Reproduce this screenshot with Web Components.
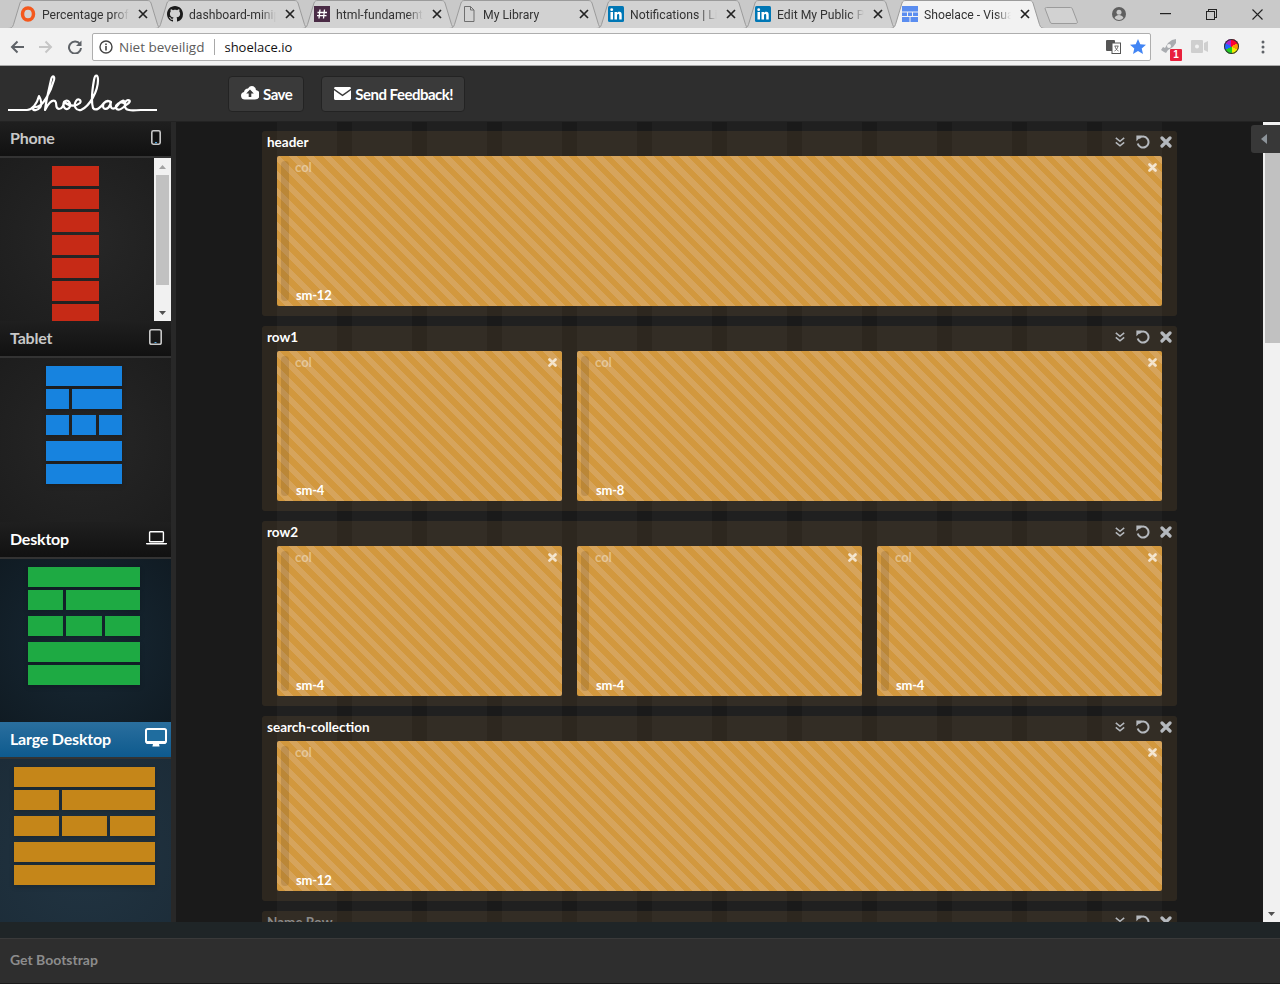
<!DOCTYPE html>
<html>
<head>
<meta charset="utf-8">
<title>Shoelace - Visual</title>
<style>
    html, body { margin: 0; height: 100%; background: #1b1b1b; overflow: hidden; }
    body { display: flex; flex-direction: column; height: 984px; font-family: "Lato", "Liberation Sans", sans-serif; }
</style>
</head>
<body>
<browser-chrome></browser-chrome>
<app-header></app-header>
<app-main>
    <device-panel slot="sidebar" name="Phone" icon="phone" height="199" head="34" pad="10" tone="plain" preview="dark" muted>
        <layout-preview color="#c62a16" start="52" rows="47;47;47;47;47;47;47" flat></layout-preview>
        <mini-scrollbar slot="bar"></mini-scrollbar>
    </device-panel>
    <device-panel slot="sidebar" name="Tablet" icon="tablet" height="201" head="35" pad="9" tone="plain" preview="dark" muted>
        <layout-preview color="#1783df" start="46" rows="76;23 50;23 24 23;76;76"></layout-preview>
    </device-panel>
    <device-panel slot="sidebar" name="Desktop" icon="laptop" height="200" head="35" pad="4" tone="plain" preview="navy">
        <layout-preview color="#1eaa43" start="28" rows="112;35 74;35 36 35;112;112"></layout-preview>
    </device-panel>
    <device-panel slot="sidebar" name="Large Desktop" icon="desktop" height="200" head="35" pad="4" tone="active" preview="blue">
        <layout-preview color="#c58619" start="14" rows="141;45 93;45 45 45;141;141"></layout-preview>
    </device-panel>

    <grid-row name="header"><grid-col span="12" label="sm-12"></grid-col></grid-row>
    <grid-row name="row1"><grid-col span="4" label="sm-4"></grid-col><grid-col span="8" label="sm-8"></grid-col></grid-row>
    <grid-row name="row2"><grid-col span="4" label="sm-4"></grid-col><grid-col span="4" label="sm-4"></grid-col><grid-col span="4" label="sm-4"></grid-col></grid-row>
    <grid-row name="search-collection"><grid-col span="12" label="sm-12"></grid-col></grid-row>
    <grid-row name="Name Row" placeholder></grid-row>
</app-main>
<app-footer></app-footer>

<script>
const ICONS = {
    phone: `<svg width="10" height="15" viewBox="0 0 10 15"><rect x=".8" y=".8" width="8.4" height="13.4" rx="1.6" fill="none" stroke="currentColor" stroke-width="1.6"/><rect x="2" y="3" width="6" height="8" fill="#111" /><rect x="4" y="12" width="2" height="1.2" fill="#4aa3df"/></svg>`,
    tablet: `<svg width="13" height="16" viewBox="0 0 13 16"><rect x=".8" y=".8" width="11.4" height="14.4" rx="1.8" fill="none" stroke="currentColor" stroke-width="1.6"/><rect x="5.5" y="13" width="2" height="1" fill="#4aa3df"/></svg>`,
    laptop: `<svg width="21" height="14" viewBox="0 0 21 14"><rect x="3.6" y=".7" width="13.8" height="10" rx=".8" fill="none" stroke="currentColor" stroke-width="1.4"/><path d="M0 12h21v.6c0 .6-.4.9-1 .9H1c-.6 0-1-.3-1-.9z" fill="currentColor"/></svg>`,
    desktop: `<svg width="22" height="20" viewBox="0 0 22 20"><rect x="1" y="1" width="20" height="13.5" rx="1.6" fill="#1f6d9f" stroke="currentColor" stroke-width="2"/><path d="M1 13h20v1.5a1.5 1.5 0 0 1-1.5 1.5h-17A1.5 1.5 0 0 1 1 14.500z" fill="currentColor"/><path d="M8 16h6l.6 2.500H7.400z" fill="currentColor"/></svg>`,
    cloud: `<svg width="18" height="14" viewBox="0 0 18 14"><path fill-rule="evenodd" fill="#fff" d="M4 13.500A3.800 3.800 0 0 1 3 6a4.300 4.300 0 0 1 4-3.500C8 .8 9.500 0 10.800 0c2.300 0 4 1.700 4.100 4a4.800 4.800 0 0 1 -1 9.500zM9 3.500 5.200 7.500h2.500v3.500h2.600V7.500h2.500z"/></svg>`,
    mail: `<svg width="17" height="13" viewBox="0 0 17 13"><path fill="#fff" d="M1.500 0h14c.8 0 1.500.6 1.500 1.400L8.500 7.500 0 1.400C0 .6.700 0 1.500 0z"/><path fill="#fff" d="M0 3.200 8.500 9.300 17 3.200v8.300c0 .8-.7 1.500-1.500 1.500h-14C.7 13 0 12.300 0 11.500z"/></svg>`,
    chevrons: `<svg width="10" height="10" viewBox="0 0 10 10" fill="none" stroke="currentColor" stroke-width="1.500"><path d="M.8 .8 5 4.300 9.200 .8"/><path d="M.8 5.300 5 8.800 9.200 5.300"/></svg>`,
    undo: `<svg width="14" height="14" viewBox="0 0 14 14" fill="none"><path d="M3 3.300A5.500 5.500 0 1 1 1.700 8.500" stroke="currentColor" stroke-width="2"/><path d="M.4 .6 6 .6 .4 6.200z" fill="currentColor"/></svg>`,
    times: `<svg width="12" height="12" viewBox="0 0 12 12" stroke="currentColor" stroke-width="3.200" stroke-linecap="round"><path d="M2 2l8 8M10 2l-8 8"/></svg>`
}

// favicons for the tabs
const FAVICONS = {
    ring: `<svg width="16" height="16" viewBox="0 0 16 16"><ellipse cx="8" cy="8" rx="5.500" ry="6" fill="none" stroke="#f4581c" stroke-width="3.500"/></svg>`,
    github: `<svg width="16" height="16" viewBox="0 0 16 16"><path fill="#1b1b1b" d="M8 0C3.580 0 0 3.580 0 8c0 3.540 2.290 6.530 5.470 7.590.4.070.55-.17.55-.38 0-.19-.01-.82-.01-1.490-2.010.37-2.530-.49-2.690-.94-.09-.23-.48-.94-.82-1.130-.28-.15-.68-.52-.01-.53.63-.01 1.080.58 1.230.82.72 1.210 1.870.87 2.330.66.07-.52.28-.87.51-1.070-1.780-.2-3.640-.89-3.640-3.950 0-.87.31-1.590.82-2.150-.08-.2-.36-1.020.08-2.120 0 0 .67-.21 2.200.82.64-.18 1.320-.27 2-.27.68 0 1.360.09 2 .27 1.530-1.040 2.200-.82 2.200-.82.44 1.100.16 1.920.08 2.120.51.56.82 1.270.82 2.150 0 3.070-1.870 3.750-3.650 3.950.29.25.54.73.54 1.480 0 1.070-.01 1.930-.01 2.200 0 .21.15.46.55.38A8.013 8.013 0 0 0 16 8c0-4.420-3.580-8-8-8z"/></svg>`,
    hash: `<svg width="16" height="16" viewBox="0 0 16 16"><rect width="16" height="16" fill="#4a2b45"/><path d="M6 3.500 5 12.500M10.500 3.500l-1 9M3.500 6.500h9.500M3 9.700h9.500" stroke="#fff" stroke-width="1.300"/></svg>`,
    doc: `<svg width="16" height="16" viewBox="0 0 16 16" fill="none" stroke="#6f6f6f"><path d="M3.500 .5h6l3.500 3.500v11.500h-9.500z"/><path d="M9.500 .5v3.500h3.500"/></svg>`,
    linkedin: `<svg width="16" height="16" viewBox="0 0 16 16"><rect width="16" height="16" rx="1.500" fill="#0077b5"/><rect x="2.500" y="6" width="2.500" height="7.500" fill="#fff"/><circle cx="3.700" cy="3.700" r="1.400" fill="#fff"/><path d="M6.500 6H9v1.100C9.500 6.300 10.300 5.800 11.300 5.800c1.700 0 2.400 1.100 2.400 3v4.700h-2.500V9.300c0-.9-.3-1.400-1-1.400S9 8.500 9 9.300v4.200H6.500z" fill="#fff"/></svg>`,
    grid: `<svg width="16" height="16" viewBox="0 0 16 16" fill="#5a8df0"><rect width="16" height="5.500"/><rect y="6.500" width="5" height="3.500"/><rect x="6" y="6.500" width="4" height="3.500"/><rect x="11" y="6.500" width="5" height="3.500"/><rect y="11" width="7.500" height="5"/><rect x="8.500" y="11" width="7.500" height="5"/></svg>`
}

class BrowserTab extends HTMLElement {
    constructor() {
        super();
        this.shadow = this.attachShadow({ mode: 'open' });
    }

    connectedCallback() {
        const active = this.hasAttribute('active');
        this.shadow.innerHTML = /*html*/`
        <style>
            :host { display: flex; align-items: center; position: relative; width: 155px; height: 28px; margin-right: -8px; padding-left: 12px; box-sizing: border-box; z-index: ${active ? 2 : 1}; font: 12.2px "Roboto", "Liberation Sans", sans-serif; color: #333; }
            .shape { position: absolute; left: 0; top: 0; z-index: -1; }
            .icon { width: 16px; height: 16px; margin-right: 6px; flex: none; display: flex; }
            .name { width: 87px; flex: none; overflow: hidden; white-space: nowrap; padding-top: 1px; -webkit-mask-image: linear-gradient(90deg, #000 82%, transparent); mask-image: linear-gradient(90deg, #000 82%, transparent); }
            .close { margin-left: 9px; width: 10px; height: 10px; display: flex; }
        </style>
        <svg class="shape" width="155" height="29" viewBox="0 0 155 29"><path d="M0 28.500c3 0 4.500-1 5.500-4L12 3c.7-1.800 1.700-2.500 4-2.500h123c2.300 0 3.300.7 4 2.500l6.500 21.500c1 3 2.500 4 5.500 4" fill="${active ? '#f2f2f2' : '#d2d2d2'}" stroke="#9b9b9b"/></svg>
        <span class="icon">${FAVICONS[this.getAttribute('icon')]}</span>
        <span class="name">${this.getAttribute('label')}</span>
        <svg class="close" viewBox="0 0 10 10" stroke="#222" stroke-width="1.700"><path d="M1 1l8 8M9 1l-8 8"/></svg>
        `;
    }
}

class BrowserChrome extends HTMLElement {
    constructor() {
        super();
        this.shadow = this.attachShadow({ mode: 'open' });
    }

    connectedCallback() {
        this.shadow.innerHTML = /*html*/`
        <style>
            :host { display: block; flex: none; font-family: "Open Sans", "Liberation Sans", sans-serif; }
            .strip { display: flex; height: 28px; padding-left: 8px; background: #c9c9c9; position: relative; }
            .newtab { margin: 6px 0 0 7px; flex: none; }
            .win { margin-left: auto; display: flex; }
            .win span { width: 46px; height: 28px; display: flex; align-items: center; justify-content: center; }
            .bar { height: 37px; background: #f2f2f2; border-bottom: 1px solid #a9a9a9; display: flex; align-items: center; padding-left: 2px; box-sizing: content-box; position: relative; z-index: 3; }
            .btn { width: 29px; display: flex; justify-content: center; flex: none; }
            .address { margin-left: 3px; width: 1059px; height: 28px; box-sizing: border-box; background: #fff; border: 1px solid #aeaeae; border-radius: 2px; display: flex; align-items: center; font-size: 13px; flex: none; }
            .info { margin-left: 6px; display: flex; }
            .insecure { margin-left: 6px; color: #5c5c5c; font-size: 13.5px; }
            .sep { margin: 0 9px 0 10px; width: 1px; height: 16px; background: #a8a8a8; }
            .url { color: #111; }
            .right { margin-left: auto; display: flex; align-items: center; gap: 9px; padding-right: 4px; }
            .ext { flex: none; width: 31.3px; height: 24px; display: flex; justify-content: center; align-items: center; position: relative; }
            .exts { margin-left: 2px; display: flex; }
            .badge { position: absolute; left: 17px; top: 14px; width: 12px; height: 12px; background: #e8203c; border-radius: 1px; color: #fff; font: bold 10px/12px "Liberation Sans", sans-serif; text-align: center; }
            .wheel { width: 15px; height: 15px; border-radius: 50%; background: conic-gradient(#f03 0 60deg, #f90 60deg 120deg, #ee0 120deg 180deg, #2c2 180deg 240deg, #26f 240deg 300deg, #a2c 300deg 360deg); box-shadow: 0 0 0 1px #333 inset; }
        </style>
        <div class="strip">
            <browser-tab icon="ring" label="Percentage prof"></browser-tab>
            <browser-tab icon="github" label="dashboard-minip"></browser-tab>
            <browser-tab icon="hash" label="html-fundament"></browser-tab>
            <browser-tab icon="doc" label="My Library"></browser-tab>
            <browser-tab icon="linkedin" label="Notifications | Lin"></browser-tab>
            <browser-tab icon="linkedin" label="Edit My Public Pr"></browser-tab>
            <browser-tab icon="grid" label="Shoelace - Visual" active></browser-tab>
            <svg class="newtab" width="36" height="19" viewBox="0 0 36 19"><path d="M2.500 1.500h24c1 0 1.500.4 1.800 1.200l5 13c.3 1-.1 1.800-1.300 1.800H8c-1 0-1.500-.5-1.800-1.300L1.200 3c-.3-.9.300-1.500 1.300-1.500z" fill="#d2d2d2" stroke="#9b9b9b"/></svg>
            <div class="win">
                <span><svg width="14" height="14" viewBox="0 0 14 14"><circle cx="7" cy="7" r="7" fill="#5f5f5f"/><circle cx="7" cy="5.200" r="2.500" fill="#c9c9c9"/><path d="M2.500 11c1-2.300 2.800-3 4.500-3s3.500.7 4.500 3a6 6 0 0 1-9 0z" fill="#c9c9c9"/></svg></span>
                <span><svg width="11" height="2"><rect width="11" height="1.200" fill="#222"/></svg></span>
                <span><svg width="11" height="11" viewBox="0 0 11 11" fill="#c9c9c9" stroke="#222"><rect x="2.500" y=".5" width="8" height="8"/><rect x=".5" y="2.500" width="8" height="8"/></svg></span>
                <span><svg width="11" height="11" viewBox="0 0 11 11" stroke="#222" stroke-width="1.100"><path d="M.5 .5l10 10M10.500 .5l-10 10"/></svg></span>
            </div>
        </div>
        <div class="bar">
            <span class="btn"><svg width="14" height="14" viewBox="0 0 14 14" fill="none" stroke="#5f6368" stroke-width="2"><path d="M14 7H2M7.500 1.500 2 7l5.500 5.500"/></svg></span>
            <span class="btn"><svg width="14" height="14" viewBox="0 0 14 14" fill="none" stroke="#c6c6c6" stroke-width="2"><path d="M0 7h12M6.500 1.500 12 7l-5.500 5.500"/></svg></span>
            <span class="btn"><svg width="14" height="14" viewBox="0 0 14 14" fill="none"><path d="M12 4.200A6 6 0 1 0 13 8" stroke="#5f6368" stroke-width="2"/><path d="M13.500 .5v5.500H8z" fill="#5f6368"/></svg></span>
            <div class="address">
                <span class="info"><svg width="14" height="14" viewBox="0 0 14 14" fill="none"><circle cx="7" cy="7" r="6" stroke="#444" stroke-width="1.400"/><rect x="6.200" y="6" width="1.600" height="4.500" fill="#444"/><rect x="6.200" y="3.500" width="1.600" height="1.600" fill="#444"/></svg></span>
                <span class="insecure">Niet beveiligd</span>
                <span class="sep"></span>
                <span class="url">shoelace.io</span>
                <span class="right">
                    <svg width="15" height="14" viewBox="0 0 15 14"><rect width="9" height="11" rx="1" fill="#555"/><rect x="6" y="3" width="8.500" height="10.500" fill="#fff" stroke="#555"/><path d="M8.500 6h4M9 6c.5 2.500 2 4.500 3.500 5M12 6c-.5 2.500-2 4.500-3.500 5" stroke="#555" fill="none" stroke-width=".8"/></svg>
                    <svg width="16" height="15" viewBox="0 0 16 15"><path d="M8 0l2.300 5.200 5.700.5-4.300 3.700 1.300 5.600L8 12l-5 3 1.300-5.600L0 5.700l5.700-.5z" fill="#4285f4"/></svg>
                </span>
            </div>
            <div class="exts">
                <span class="ext"><svg width="16" height="15" viewBox="0 0 16 15" fill="#a9acb0"><path d="M0 11l2-3 2 1 3-5 4-3 4-1v4l-3 4-5 3-2 3-2-1z"/><circle cx="8" cy="7" r="2" fill="#f2f2f2"/></svg><span class="badge">1</span></span>
                <span class="ext"><svg width="17" height="13" viewBox="0 0 17 13" fill="#cfcfcf"><rect width="12" height="13" rx="1"/><path d="M13 3l4-2v11l-4-2z"/><circle cx="6" cy="6.500" r="2" fill="#f2f2f2"/></svg></span>
                <span class="ext"><span class="wheel"></span></span>
                <span class="ext"><svg width="4" height="14" viewBox="0 0 4 14" fill="#5f6368"><circle cx="2" cy="2" r="1.500"/><circle cx="2" cy="7" r="1.500"/><circle cx="2" cy="12" r="1.500"/></svg></span>
            </div>
        </div>
        `;
    }
}

class AppButton extends HTMLElement {
    constructor() {
        super();
        this.attachShadow({ mode: 'open' }).innerHTML = /*html*/`
        <style>
            :host { display: flex; align-items: center; gap: 4px; height: 36px; box-sizing: border-box; padding: 0 11px 0 12px; background: #3a3a3a; border: 1px solid #232323; border-radius: 4px; color: #fff; font-weight: 700; font-size: 15px; letter-spacing: -.5px; line-height: 32px; }
            span { display: flex; }
        </style>
        <span><slot name="icon"></slot></span><slot></slot>
        `;
    }
}

class AppHeader extends HTMLElement {
    constructor() {
        super();
        this.shadow = this.attachShadow({ mode: 'open' });
    }

    connectedCallback() {
        this.shadow.innerHTML = /*html*/`
        <style>
            :host { display: flex; flex: none; align-items: center; height: 55px; padding-left: 8px; background: #2e2e2e; border-bottom: 1px solid #232323; box-sizing: content-box; font-family: "Lato", "Liberation Sans", sans-serif; }
            .logo { display: block; flex: none; }
            .actions { display: flex; gap: 17px; margin-left: 71px; margin-top: 1px; }
        </style>
        <svg class="logo" width="149" height="46" viewBox="0 0 149 46" role="img" aria-label="shoelace logo" fill="none" stroke="#fff" stroke-width="2.200" stroke-linecap="round" stroke-linejoin="round">
            <path d="M0 39H19C24 39 29 33 31 25C34 30 35 37 28 39C24 40 24 36 28 36C35 36 43 20 46 9C47 4 44 4 43 9C41 18 38 30 37 39C40 33 44 28 47 30C50 33 46 37 51 38C54 38 56 34 56 31C60 27 64 33 61 37C58 40 54 36 56 31C60 34 66 37 72 32C74 29 70 27 68 30C65 35 68 40 73 39C82 35 90 20 90 9C90 3 87 3 86 9C84 20 83 30 85 37C88 41 93 36 96 32C99 28 104 30 102 34C100 39 95 39 95 35C95 31 100 29 103 31C102 35 103 39 107 37C110 35 111 31 114 30C116 29 117 31 116 32C112 30 107 34 108 37C110 41 115 37 118 34C122 32 123 29 120 29C116 30 115 38 121 39C125 40 128 39 133 39H149"/>
        </svg>
        <div class="actions">
            <app-button><span slot="icon">${ICONS.cloud}</span>Save</app-button>
            <app-button><span slot="icon">${ICONS.mail}</span>Send Feedback!</app-button>
        </div>
        `;
    }
}

class DevicePanel extends HTMLElement {
    constructor() {
        super();
        this.shadow = this.attachShadow({ mode: 'open' });
    }

    connectedCallback() {
        const backgrounds = {
            dark: 'radial-gradient(circle at 50% 50%, #272727, #1d1d1d)',
            navy: 'radial-gradient(circle at 50% 50%, #182935, #101b23)',
            blue: 'radial-gradient(circle at 50% 60%, #213442, #1c2c38)'
        };
        const active = this.getAttribute('tone') === 'active';
        const textColor = this.hasAttribute('muted') ? '#c8c8c8' : '#fff';
        this.shadow.innerHTML = /*html*/`
        <style>
            :host { display: flex; flex-direction: column; flex: none; height: ${this.getAttribute('height')}px; overflow: hidden; }
            .head { flex: none; height: ${this.getAttribute('head')}px; display: flex; align-items: center; justify-content: space-between; padding: 0 ${this.getAttribute('pad')}px 0 10px; box-sizing: border-box; font-weight: 700; font-size: 16px; letter-spacing: -.2px; color: ${textColor}; background: ${active ? 'linear-gradient(#2a6f9e, #0e5a8e)' : 'linear-gradient(#1f1f1f, #111)'}; }
            .head span { margin-top: -3px; }
            .head svg { display: block; margin-top: -3px; }
            .line { flex: none; height: 2px; background: #333; }
            .view { flex: 1; display: flex; min-height: 0; background: ${backgrounds[this.getAttribute('preview')]}; }
            .inner { flex: 1; overflow: hidden; padding-top: 8px; }
        </style>
        <div class="head"><span>${this.getAttribute('name')}</span>${ICONS[this.getAttribute('icon')]}</div>
        <div class="line"></div>
        <div class="view"><div class="inner"><slot></slot></div><slot name="bar"></slot></div>
        `;
    }
}

class LayoutPreview extends HTMLElement {
    constructor() {
        super();
        this.shadow = this.attachShadow({ mode: 'open' });
    }

    connectedCallback() {
        const color = this.getAttribute('color');
        const flat = this.hasAttribute('flat');
        const rows = this.getAttribute('rows').split(';').map((row, index) => {
            const cells = row.split(' ').map(w => `<i style="width:${w}px"></i>`).join('');
            const extra = !flat && (index === 2 || index === 3) ? ' class="wide"' : '';
            return `<div${extra}>${cells}</div>`;
        }).join('');
        this.shadow.innerHTML = /*html*/`
        <style>
            :host { display: flex; flex-direction: column; gap: 3px; margin-left: ${this.getAttribute('start')}px; }
            div { display: flex; gap: 3px; flex: none; }
            div.wide { margin-top: 3px; }
            i { display: block; height: 20px; background: ${color}; box-shadow: ${flat ? 'none' : '0 2px 5px rgba(0,0,0,.18)'}; }
        </style>
        ${rows}
        `;
    }
}

class MiniScrollbar extends HTMLElement {
    constructor() {
        super();
        this.attachShadow({ mode: 'open' }).innerHTML = /*html*/`
        <style>
            :host { display: flex; flex-direction: column; flex: none; width: 17px; background: #f1f1f1; align-items: center; }
            .arrow { flex: none; height: 17px; display: flex; align-items: center; justify-content: center; }
            .thumb { flex: none; width: 13px; height: 110px; background: #c1c1c1; }
            .space { flex: 1; }
        </style>
        <div class="arrow"><svg width="7" height="4"><path d="M3.500 0 7 4H0z" fill="#a3a3a3"/></svg></div>
        <div class="thumb"></div>
        <div class="space"></div>
        <div class="arrow"><svg width="7" height="4"><path d="M0 0h7L3.500 4z" fill="#505050"/></svg></div>
        `;
    }
}

class GridRow extends HTMLElement {
    constructor() {
        super();
        this.shadow = this.attachShadow({ mode: 'open' });
    }

    connectedCallback() {
        const placeholder = this.hasAttribute('placeholder');
        this.shadow.innerHTML = /*html*/`
        <style>
            :host { display: block; width: 915px; height: 185px; margin-bottom: 10px; flex: none; background: rgba(190,140,70,.12); border-radius: 3px; box-sizing: border-box; }
            .head { height: 25px; box-sizing: border-box; display: flex; align-items: center; padding: 0 5px 4px; font-weight: 700; font-size: 13.5px; color: ${placeholder ? '#8a8a8a' : '#fff'}; }
            .tools { margin-left: auto; display: flex; align-items: center; color: #b5b9be; }
            .tools svg { display: block; }
            .tools svg:nth-child(2) { margin-left: 11px; }
            .tools svg:nth-child(3) { margin-left: 10px; }
            .grid { display: grid; grid-template-columns: repeat(12, 1fr); gap: 15px; padding: 0 15px; height: 150px; }
        </style>
        <div class="head"><span>${this.getAttribute('name')}</span><span class="tools">${ICONS.chevrons}${ICONS.undo}${ICONS.times}</span></div>
        <div class="grid"><slot></slot></div>
        `;
    }
}

class GridCol extends HTMLElement {
    constructor() {
        super();
        this.shadow = this.attachShadow({ mode: 'open' });
    }

    connectedCallback() {
        this.shadow.innerHTML = /*html*/`
        <style>
            :host { display: block; position: relative; grid-column: span ${this.getAttribute('span')}; min-width: 0; border-radius: 2px; overflow: hidden; background: repeating-linear-gradient(45deg, #d2983e 0 6px, #d6a45c 6px 12px); color: #fff; font-weight: 700; font-size: 13px; letter-spacing: -.2px; }
            .handle { position: absolute; left: 4px; top: 5px; bottom: 5px; width: 8px; border-radius: 4px; background: rgba(60,40,20,.15); }
            .col { position: absolute; left: 18px; top: 3px; color: rgba(255,255,255,.4); letter-spacing: 0; }
            .size { position: absolute; left: 19px; bottom: 3px; }
            .close { position: absolute; right: 5px; top: 7px; color: rgba(255,255,255,.72); display: block; }
        </style>
        <div class="handle"></div>
        <span class="col">col</span>
        <span class="size">${this.getAttribute('label')}</span>
        <svg class="close" width="9" height="9" viewBox="0 0 12 12" stroke="currentColor" stroke-width="3.600" stroke-linecap="round"><path d="M2 2l8 8M10 2l-8 8"/></svg>
        `;
    }
}

class AppMain extends HTMLElement {
    constructor() {
        super();
        this.attachShadow({ mode: 'open' }).innerHTML = /*html*/`
        <style>
            :host { display: flex; flex: none; height: 800px; position: relative; overflow: hidden; font-family: "Lato", "Liberation Sans", sans-serif; }
            .sidebar { flex: none; width: 171px; display: flex; flex-direction: column; overflow: hidden; }
            .divider { flex: none; width: 5px; background: #282828; }
            .content { flex: 1; min-width: 0; overflow: hidden; padding: 9px 0 0 86px; display: flex; flex-direction: column; background-color: #1a1a1a; background-image: repeating-linear-gradient(90deg, #202020 0 60px, transparent 60px 75px); background-size: 885px 100%; background-position: 101px 0; background-repeat: no-repeat; }
            .bar { flex: none; width: 17px; background: #f1f1f1; position: relative; display: flex; flex-direction: column; align-items: flex-end; }
            .thumb { margin-top: 31px; width: 15px; height: 190px; background: #c1c1c1; flex: none; }
            .down { margin-top: auto; width: 17px; height: 17px; display: flex; align-items: center; justify-content: center; }
            .toggle { position: absolute; right: 0; top: 3px; width: 29px; height: 28px; padding-right: 4px; box-sizing: border-box; background: #383838; border-radius: 3px 0 0 3px; display: flex; align-items: center; justify-content: center; }
        </style>
        <div class="sidebar"><slot name="sidebar"></slot></div>
        <div class="divider"></div>
        <div class="content"><slot></slot></div>
        <div class="bar">
            <div class="thumb"></div>
            <div class="down"><svg width="7" height="4"><path d="M0 0h7L3.500 4z" fill="#505050"/></svg></div>
        </div>
        <div class="toggle"><svg width="6" height="10"><path d="M6 0v10L0 5z" fill="#8d949a"/></svg></div>
        `;
    }
}

class AppFooter extends HTMLElement {
    constructor() {
        super();
        this.attachShadow({ mode: 'open' }).innerHTML = /*html*/`
        <style>
            :host { display: block; flex: none; font-family: "Lato", "Liberation Sans", sans-serif; }
            .band { height: 16px; background: #1f2527; }
            .foot { height: 45px; box-sizing: border-box; background: #2e2e2e; border-top: 1px solid #3a3a3a; display: flex; align-items: center; padding: 0 0 3px 10px; color: #8c8c8c; font-weight: 700; font-size: 14px; }
        </style>
        <div class="band"></div>
        <div class="foot">Get Bootstrap</div>
        `;
    }
}

customElements.define('browser-tab', BrowserTab);
customElements.define('browser-chrome', BrowserChrome);
customElements.define('app-button', AppButton);
customElements.define('app-header', AppHeader);
customElements.define('device-panel', DevicePanel);
customElements.define('layout-preview', LayoutPreview);
customElements.define('mini-scrollbar', MiniScrollbar);
customElements.define('grid-row', GridRow);
customElements.define('grid-col', GridCol);
customElements.define('app-main', AppMain);
customElements.define('app-footer', AppFooter);
</script>
</body>
</html>
